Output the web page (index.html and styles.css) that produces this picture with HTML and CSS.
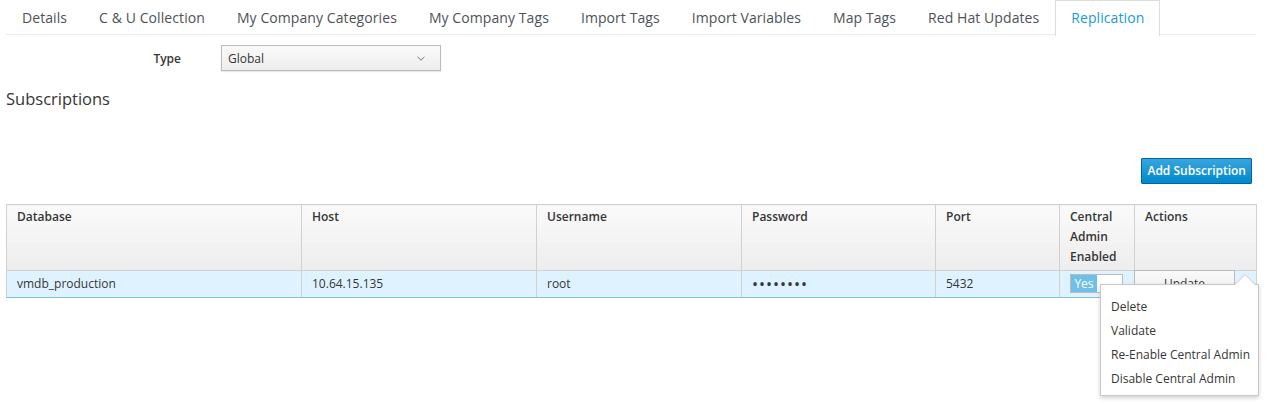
FILE: index.html
```html
<!DOCTYPE html>
<html>
<head>
<meta charset="utf-8">
<link rel="stylesheet" href="styles.css">
</head>
<body>
<div class="page">
  <ul class="tabs">
    <li class="tab">Details</li>
    <li class="tab">C &amp; U Collection</li>
    <li class="tab">My Company Categories</li>
    <li class="tab">My Company Tags</li>
    <li class="tab">Import Tags</li>
    <li class="tab">Import Variables</li>
    <li class="tab">Map Tags</li>
    <li class="tab">Red Hat Updates</li>
    <li class="tab active">Replication</li>
  </ul>

  <div class="form-row">
    <label class="form-label">Type</label>
    <div class="select">
      <span>Global</span>
      <svg class="chev" width="8" height="5" viewBox="0 0 8 5"><path d="M0.5 0.8 L4 4.2 L7.5 0.8" fill="none" stroke="#777" stroke-width="1"/></svg>
    </div>
  </div>

  <h3 class="section-title">Subscriptions</h3>

  <div class="toolbar">
    <button class="btn-primary">Add Subscription</button>
  </div>

  <table class="grid">
    <colgroup>
      <col class="c1"><col class="c2"><col class="c3"><col class="c4"><col class="c5"><col class="c6"><col class="c7">
    </colgroup>
    <thead>
      <tr>
        <th>Database</th>
        <th>Host</th>
        <th>Username</th>
        <th>Password</th>
        <th>Port</th>
        <th>Central Admin Enabled</th>
        <th>Actions</th>
      </tr>
    </thead>
    <tbody>
      <tr class="selected">
        <td>vmdb_production</td>
        <td>10.64.15.135</td>
        <td>root</td>
        <td class="pw">&bull;&bull;&bull;&bull;&bull;&bull;&bull;&bull;</td>
        <td>5432</td>
        <td class="switch-cell">
          <div class="switch"><span class="switch-on">Yes</span><span class="switch-off"></span></div>
        </td>
        <td class="actions">
          <div class="actions-wrap">
            <button class="btn-default">Update</button>
            <div class="menu-arrow"></div>
            <ul class="menu">
              <li>Delete</li>
              <li>Validate</li>
              <li>Re-Enable Central Admin</li>
              <li>Disable Central Admin</li>
            </ul>
          </div>
        </td>
      </tr>
    </tbody>
  </table>
</div>
</body>
</html>
```

FILE: styles.css
```css
* { box-sizing: border-box; }
html, body { margin: 0; padding: 0; background: #fff; }
html, body { min-height: 100%; height: 100%; }
body {
  font-family: "Open Sans", "Liberation Sans", sans-serif;
  font-size: 12px;
  color: #363636;
}
.page { padding: 0 13px 0 6px; min-height: 405px; }

.tabs {
  list-style: none;
  margin: 0;
  padding: 0;
  display: flex;
  border-bottom: 1px solid #ededed;
  height: 35px;
}
.tab {
  font-size: 14px;
  line-height: 20px;
  letter-spacing: 0.08px;
  padding: 7px 15px 6px;
  border: 1px solid transparent;
  border-bottom: 0;
  color: #4d5258;
  height: 35px;
  white-space: nowrap;
}
.tab.active {
  color: #1a9ad6;
  border-color: #dddddd;
  background: #fff;
  height: 36px;
}

.form-row {
  display: flex;
  align-items: center;
  margin-top: 10px;
}
.form-label {
  width: 175px;
  text-align: right;
  font-weight: 600;
  color: #363636;
}
.select {
  margin-left: 40px;
  width: 220px;
  height: 26px;
  border: 1px solid #bbbbbb;
  background: linear-gradient(#fafafa, #ededed);
  box-shadow: 0 1px 1px rgba(3,3,3,0.08);
  display: flex;
  align-items: center;
  justify-content: space-between;
  padding: 0 15px 0 6px;
  color: #363636;
}
.chev { display: block; }

.section-title {
  margin: 16px 0 0;
  font-size: 16.5px;
  font-weight: 400;
  line-height: 24px;
  color: #363636;
}

.toolbar {
  display: flex;
  justify-content: flex-end;
  margin-top: 47px;
  padding-right: 4px;
}
.btn-primary {
  font-family: inherit;
  font-size: 12px;
  font-weight: 600;
  color: #fff;
  background: linear-gradient(#39a5dc, #0088ce);
  border: 1px solid #00659c;
  border-radius: 1px;
  height: 26px;
  padding: 0 5px;
  line-height: 24px;
}

.grid {
  margin-top: 20px;
  width: 1250px;
  border-collapse: collapse;
  table-layout: fixed;
}
.c1 { width: 295px; }
.c2 { width: 235px; }
.c3 { width: 205px; }
.c4 { width: 194px; }
.c5 { width: 124px; }
.c6 { width: 75px; }
.c7 { width: 122px; }

.grid th {
  text-align: left;
  vertical-align: top;
  font-weight: 600;
  color: #363636;
  line-height: 20px;
  padding: 2px 10px 3px;
  border: 1px solid #d1d1d1;
  background: linear-gradient(#fafafa, #ededed);
}
.grid td {
  line-height: 20px;
  padding: 2px 10px 3px;
  border: 1px solid #d1d1d1;
  vertical-align: middle;
  height: 27px;
}
.grid tr.selected td {
  background: #def3ff;
  border-bottom-color: #7dc3e8;
}
.grid td.pw { letter-spacing: 1px; font-size: 16px; line-height: 20px; color: #363636; }

.switch {
  display: flex;
  width: 53px;
  height: 19px;
  border: 1px solid #bbbbbb;
  background: #fff;
}
.switch-on {
  width: 26px;
  background: #6fbfe8;
  color: #fff;
  font-size: 12px;
  line-height: 17px;
  text-align: center;
}
.switch-off { flex: 1; }

.grid td.actions { padding: 0; vertical-align: top; }
.actions-wrap { position: relative; height: 26px; }
.btn-default {
  display: block;
  width: 101px;
  height: 27px;
  margin: -1px 0 0 -1px;
  font-family: inherit;
  font-size: 12px;
  color: #363636;
  background: linear-gradient(#fafafa, #ededed);
  border: 1px solid #bbbbbb;
  padding: 0;
  line-height: 25px;
}
.menu-arrow {
  position: absolute;
  left: 99px;
  top: 4px;
  width: 0;
  height: 0;
  border-left: 11px solid transparent;
  border-right: 11px solid transparent;
  border-bottom: 11px solid #c8c8c8;
  z-index: 3;
}
.menu-arrow::after {
  content: "";
  position: absolute;
  left: -10px;
  top: 1px;
  border-left: 10px solid transparent;
  border-right: 10px solid transparent;
  border-bottom: 10px solid #fff;
}
.menu {
  position: absolute;
  left: -35px;
  top: 14px;
  width: 159px;
  margin: 0;
  padding: 10px 0 4px;
  list-style: none;
  background: #fff;
  border: 1px solid #c8c8c8;
  box-shadow: 0 2px 4px rgba(3,3,3,0.18);
  z-index: 2;
}
.menu li {
  line-height: 24px;
  padding: 0 10px;
  white-space: nowrap;
  color: #363636;
}
```
